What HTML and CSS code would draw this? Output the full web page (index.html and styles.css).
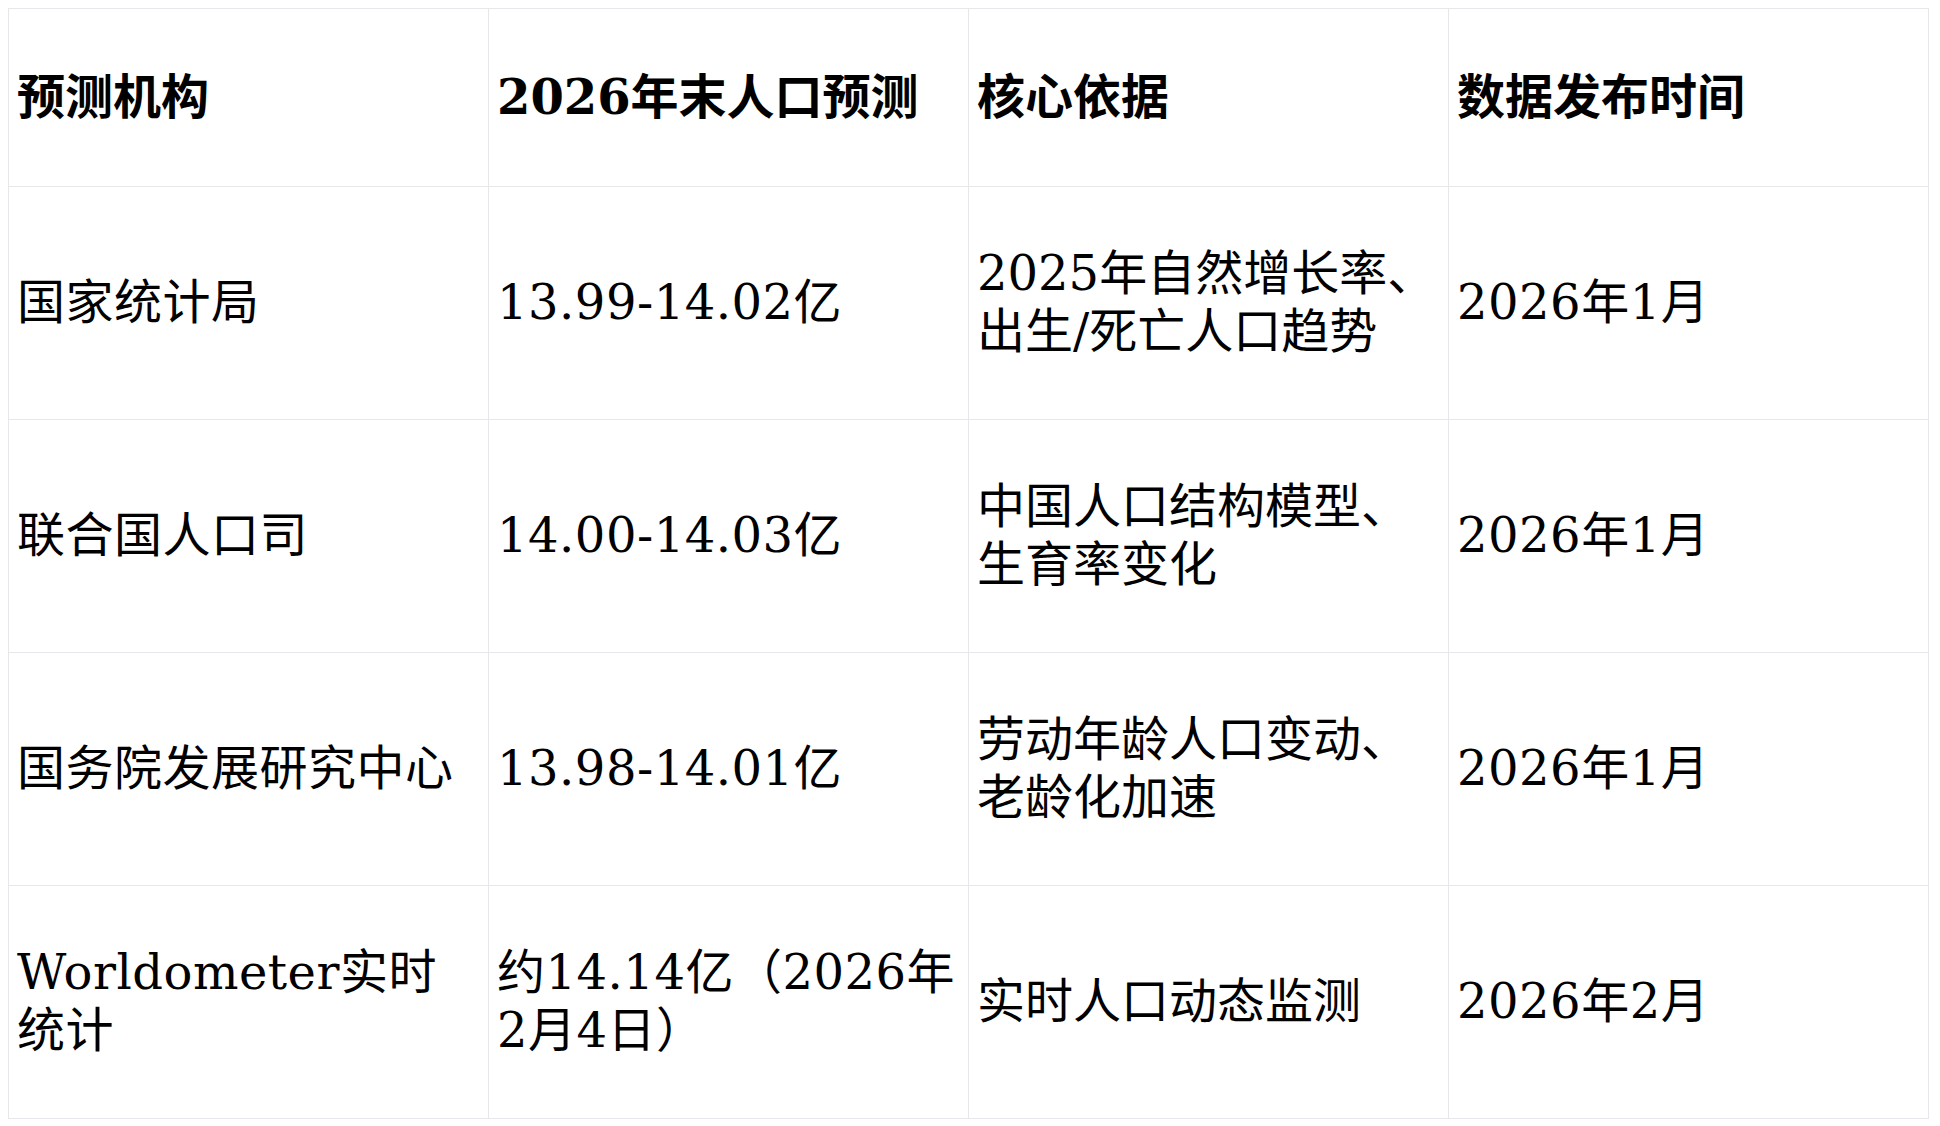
FILE: index.html
```html
<!DOCTYPE html>
<html lang="zh-CN">
<head>
<meta charset="utf-8">
<title>2026年末人口预测</title>
<link rel="stylesheet" href="styles.css">
</head>
<body>
<table class="forecast">
  <thead>
    <tr>
      <th>预测机构</th>
      <th>2026年末人口预测</th>
      <th>核心依据</th>
      <th>数据发布时间</th>
    </tr>
  </thead>
  <tbody>
    <tr>
      <td>国家统计局</td>
      <td>13.99-14.02亿</td>
      <td class="basis">2025年自然增长率、出生/死亡人口趋势</td>
      <td>2026年1月</td>
    </tr>
    <tr>
      <td>联合国人口司</td>
      <td>14.00-14.03亿</td>
      <td class="basis">中国人口结构模型、生育率变化</td>
      <td>2026年1月</td>
    </tr>
    <tr>
      <td>国务院发展研究中心</td>
      <td>13.98-14.01亿</td>
      <td class="basis">劳动年龄人口变动、老龄化加速</td>
      <td>2026年1月</td>
    </tr>
    <tr>
      <td>Worldometer实时统计</td>
      <td>约14.14亿（2026年2月4日）</td>
      <td class="basis">实时人口动态监测</td>
      <td>2026年2月</td>
    </tr>
  </tbody>
</table>
</body>
</html>
```

FILE: styles.css
```css
body {
  margin: 8px;
  background: #ffffff;
  color: #000000;
  font-family: "DejaVu Serif", "Noto Sans CJK SC", serif;
  font-size: 48px;
  line-height: 1.2;
}

.forecast {
  width: 1921px;
  border-collapse: collapse;
  table-layout: fixed;
}

.forecast thead tr {
  height: 178px;
}

.forecast tbody tr {
  height: 233px;
}

.forecast th,
.forecast td {
  border: 1px solid #e5e7eb;
  padding: 8px;
  text-align: left;
  vertical-align: middle;
}

.forecast td {
  letter-spacing: 0.5px;
}

.forecast td.basis {
  letter-spacing: 0;
}

.forecast th {
  font-weight: bold;
}
```
